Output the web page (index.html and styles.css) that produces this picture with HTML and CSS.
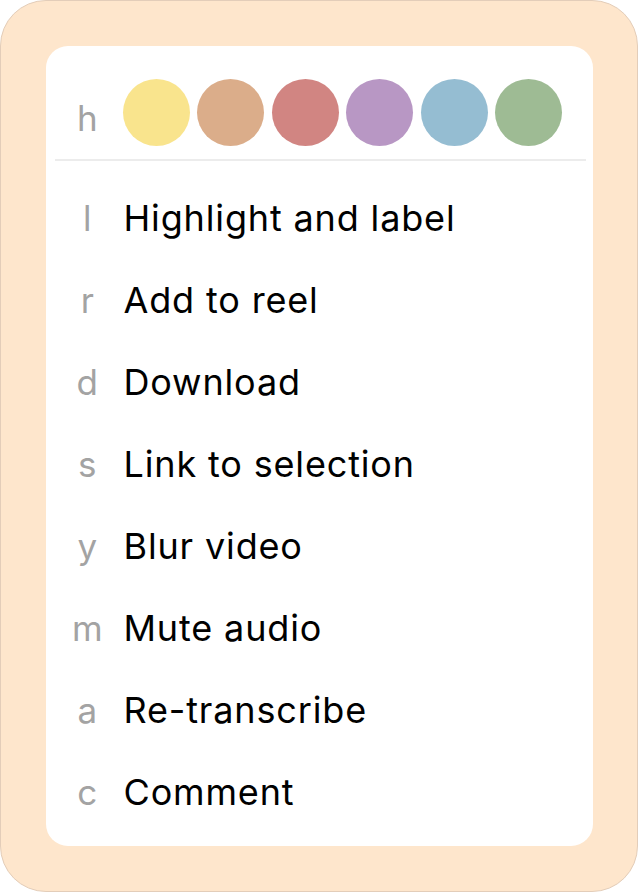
FILE: index.html
```html
<!DOCTYPE html>
<html>
<head>
<meta charset="utf-8">
<link rel="stylesheet" href="styles.css">
</head>
<body>
<div class="frame">
  <div class="card">
    <div class="header">
      <span class="key">h</span>
      <div class="swatches">
        <span class="dot yellow"></span>
        <span class="dot tan"></span>
        <span class="dot red"></span>
        <span class="dot purple"></span>
        <span class="dot blue"></span>
        <span class="dot green"></span>
      </div>
    </div>
    <div class="divider"></div>
    <ul class="menu">
      <li class="item"><span class="key">l</span><span class="label">Highlight and label</span></li>
      <li class="item"><span class="key">r</span><span class="label">Add to reel</span></li>
      <li class="item"><span class="key">d</span><span class="label">Download</span></li>
      <li class="item"><span class="key">s</span><span class="label">Link to selection</span></li>
      <li class="item"><span class="key">y</span><span class="label">Blur video</span></li>
      <li class="item"><span class="key">m</span><span class="label">Mute audio</span></li>
      <li class="item"><span class="key">a</span><span class="label">Re-transcribe</span></li>
      <li class="item"><span class="key">c</span><span class="label">Comment</span></li>
    </ul>
  </div>
</div>
</body>
</html>
```
FILE: styles.css
```css
* { box-sizing: border-box; }
html, body { margin: 0; padding: 0; }
body {
  width: 638px;
  height: 892px;
  font-family: Inter, "Noto Sans", sans-serif;
  background: #ffffff;
}
.frame {
  width: 638px;
  height: 892px;
  background: #fee6cc;
  border: 1.5px solid #e3cdb9;
  border-radius: 46px;
  padding: 44.5px 44.5px;
}
.card {
  background: #ffffff;
  border-radius: 22px;
  height: 800px;
  display: flex;
  flex-direction: column;
}
.header {
  display: flex;
  align-items: center;
  padding: 33px 0 13px 24px;
}
.key {
  width: 36px;
  flex: none;
  text-align: center;
  color: #a3a3a3;
  font-size: 35px;
  letter-spacing: 0.5px;
  margin-right: 18px;
}
.header .key {
  margin-right: 17px;
  margin-top: 12px;
}
.swatches {
  display: flex;
  gap: 7.5px;
}
.dot {
  width: 67px;
  height: 67px;
  border-radius: 50%;
  display: block;
}
.yellow { background: #f9e48d; }
.tan { background: #dbad8a; }
.red { background: #d18582; }
.purple { background: #b897c4; }
.blue { background: #95bdd2; }
.green { background: #9ebb94; }
.divider {
  height: 2px;
  background: #ececec;
  margin: 0 7px 0 9px;
}
.menu {
  list-style: none;
  margin: 0;
  padding: 16px 0 0 24px;
}
.item {
  height: 82px;
  display: flex;
  align-items: center;
}
.label {
  font-size: 36px;
  letter-spacing: 0.85px;
  color: #000000;
}
```
